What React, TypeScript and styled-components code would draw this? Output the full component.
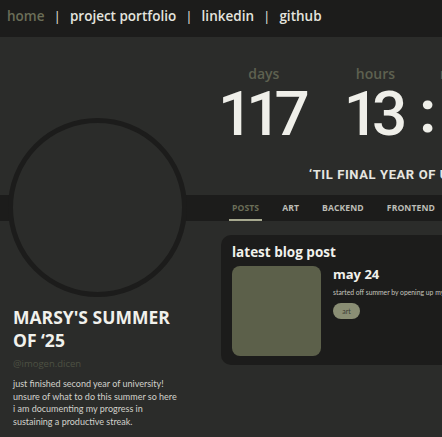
import React from "react";
import styled, { createGlobalStyle } from "styled-components";

const Global = createGlobalStyle`
  html, body { margin: 0; padding: 0; background: #2b2c2a; overflow: hidden; }
  body { font-family: "Open Sans", "Noto Sans", sans-serif; }
  * { box-sizing: border-box; }
`;

const Nav = styled.nav`
  height: 37px;
  background: #1c1c1b;
  display: flex;
  align-items: center;
  padding: 0 0 5px 7px;
  gap: 9px;
  font-family: "Open Sans", sans-serif;
  font-weight: 600;
  font-size: 13.5px;
  color: #e4e4df;
`;

const NavLink = styled.a<{ $active?: boolean }>`
  color: ${(p) => (p.$active ? "#6b6e58" : "#e4e4df")};
  text-decoration: none;
`;

const Sep = styled.span`
  color: #e4e4df;
  font-weight: 400;
`;

const Main = styled.main`
  display: grid;
  grid-template-columns: 221px 1fr;
  grid-template-rows: auto 26px 1fr;
  width: 442px;
  overflow: hidden;
`;

const Band = styled.div`
  grid-column: 1 / 3;
  grid-row: 2;
  background: #1c1c1b;
  display: flex;
  align-items: stretch;
  padding-left: 229px;
  gap: 17px;
`;

const Tab = styled.div<{ $active?: boolean }>`
  display: flex;
  align-items: center;
  padding: 2px 3px 0;
  font-size: 8.6px;
  font-weight: 700;
  letter-spacing: 0.1px;
  color: ${(p) => (p.$active ? "#6b6e58" : "#bdbdb6")};
  border-bottom: 2px solid ${(p) => (p.$active ? "#a7a98f" : "transparent")};
`;

const Left = styled.section`
  grid-column: 1;
  grid-row: 1 / 4;
  position: relative;
  z-index: 1;
  display: flex;
  flex-direction: column;
  padding: 81px 0 0 13px;
`;

const Avatar = styled.div`
  width: 179px;
  height: 179px;
  margin-left: -5px;
  border-radius: 50%;
  border: 5px solid #1c1c1b;
  background: #2b2c2a;
`;

const Title = styled.h1`
  margin: 9px 0 0;
  font-size: 17.5px;
  line-height: 23px;
  font-weight: 700;
  color: #f1f1ec;
`;

const Handle = styled.div`
  margin-top: 5px;
  font-size: 9.5px;
  color: #4d5143;
`;

const Bio = styled.p`
  margin: 8px 0 0;
  font-family: "Lato", sans-serif;
  font-size: 9px;
  line-height: 12.6px;
  color: #d2d2cc;
  width: 200px;
`;

const Top = styled.section`
  grid-column: 2;
  grid-row: 1;
  padding-top: 29px;
  display: flex;
  flex-direction: column;
`;

const Countdown = styled.div`
  display: flex;
  align-items: flex-end;
  gap: 34px;
  margin-left: -3px;
  white-space: nowrap;
`;

const Unit = styled.div`
  display: flex;
  flex-direction: column;
  align-items: center;
`;

const Label = styled.div`
  font-size: 14px;
  line-height: 16px;
  font-weight: 600;
  color: #5e6150;
`;

const Num = styled.div<{ $lead?: number }>`
  font-family: "Roboto", sans-serif;
  font-size: 62px;
  line-height: 62px;
  font-weight: 500;
  letter-spacing: -7px;
  padding-right: 7px;
  padding-left: ${(p) => p.$lead ?? 0}px;
  color: #efefe9;
  margin-top: 1px;
`;

const Colon = styled.div`
  font-family: "Roboto", sans-serif;
  font-weight: 700;
  font-size: 60px;
  line-height: 62px;
  padding-bottom: 2px;
  color: #efefe9;
  margin: 0 -41px 0 -22px;
`;

const Tagline = styled.div`
  margin: 22px 0 13px 88px;
  font-family: "Roboto", sans-serif;
  font-weight: 700;
  font-size: 13px;
  line-height: 15px;
  letter-spacing: 0.6px;
  color: #e6e6e0;
  white-space: nowrap;
`;

const Card = styled.article`
  grid-column: 2;
  grid-row: 3;
  align-self: start;
  margin-top: 14px;
  width: 260px;
  background: #1c1c1b;
  border-radius: 10px;
  padding: 8px 11px 9px;
`;

const CardTitle = styled.h2`
  margin: 0 0 5px;
  font-size: 13.5px;
  line-height: 18px;
  font-weight: 700;
  color: #f1f1ec;
`;

const PostRow = styled.div`
  display: flex;
  gap: 12px;
`;

const Thumb = styled.div`
  width: 89px;
  height: 90px;
  flex: none;
  border-radius: 8px;
  background: #5c604a;
`;

const PostInfo = styled.div`
  display: flex;
  flex-direction: column;
  align-items: flex-start;
`;

const PostDate = styled.div`
  font-size: 13px;
  line-height: 16px;
  font-weight: 700;
  color: #f1f1ec;
`;

const PostText = styled.div`
  margin-top: 6px;
  font-family: "Lato", sans-serif;
  font-size: 6.8px;
  color: #c4c4be;
  white-space: nowrap;
`;

const Pill = styled.span`
  margin-top: 7px;
  width: 27px;
  height: 16px;
  border-radius: 8px;
  background: #8a8e74;
  color: #3b3c36;
  font-family: "Lato", sans-serif;
  font-size: 7px;
  display: flex;
  align-items: center;
  justify-content: center;
`;

export default function App() {
  return (
    <>
      <Global />
      <Nav>
        <NavLink $active href="#">home</NavLink>
        <Sep>|</Sep>
        <NavLink href="#">project portfolio</NavLink>
        <Sep>|</Sep>
        <NavLink href="#">linkedin</NavLink>
        <Sep>|</Sep>
        <NavLink href="#">github</NavLink>
      </Nav>
      <Main>
        <Band>
          <Tab $active>POSTS</Tab>
          <Tab>ART</Tab>
          <Tab>BACKEND</Tab>
          <Tab>FRONTEND</Tab>
        </Band>
        <Left>
          <Avatar />
          <Title>
            MARSY'S SUMMER
            <br />
            OF ‘25
          </Title>
          <Handle>@imogen.dicen</Handle>
          <Bio>
            just finished second year of university!
            <br />
            unsure of what to do this summer so here
            <br />
            i am documenting my progress in
            <br />
            sustaining a productive streak.
          </Bio>
        </Left>
        <Top>
          <Countdown>
            <Unit>
              <Label>days</Label>
              <Num>117</Num>
            </Unit>
            <Unit>
              <Label>hours</Label>
              <Num>13</Num>
            </Unit>
            <Colon>:</Colon>
            <Unit>
              <Label>minutes</Label>
              <Num $lead={14}>42</Num>
            </Unit>
          </Countdown>
          <Tagline>‘TIL FINAL YEAR OF UNIVERSITY</Tagline>
        </Top>
        <Card>
          <CardTitle>latest blog post</CardTitle>
          <PostRow>
            <Thumb />
            <PostInfo>
              <PostDate>may 24</PostDate>
              <PostText>started off summer by opening up my sketchbook again</PostText>
              <Pill>art</Pill>
            </PostInfo>
          </PostRow>
        </Card>
      </Main>
    </>
  );
}
